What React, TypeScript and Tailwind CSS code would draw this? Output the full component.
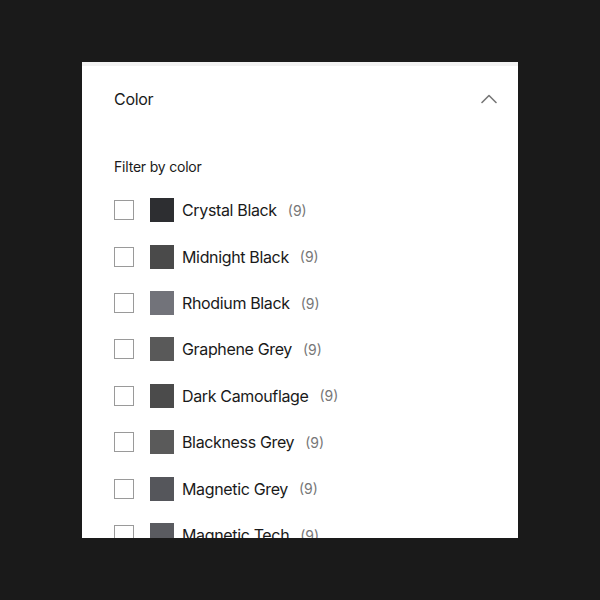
const colors = [
  { name: 'Crystal Black', swatch: 'bg-[#2d2e31]' },
  { name: 'Midnight Black', swatch: 'bg-[#4a4a4a]' },
  { name: 'Rhodium Black', swatch: 'bg-[#72737a]' },
  { name: 'Graphene Grey', swatch: 'bg-[#595959]' },
  { name: 'Dark Camouflage', swatch: 'bg-[#4b4b4b]' },
  { name: 'Blackness Grey', swatch: 'bg-[#5a5a5a]' },
  { name: 'Magnetic Grey', swatch: 'bg-[#55565b]' },
  { name: 'Magnetic Tech', swatch: 'bg-[#5a5b60]' },
];

export default function App() {
  return (
    <div
      className="w-[600px] h-[600px] bg-[#1a1a1a] flex items-center justify-center"
      style={{ fontFamily: 'Inter, "Noto Sans", sans-serif' }}
    >
      <div className="w-[436px] h-[476px] bg-white border-t-4 border-[#f2f2f2] overflow-hidden pl-8 pr-[21px]">
        <div className="flex items-center justify-between h-[24px] mt-[21px]">
          <span className="text-[16px] tracking-[-0.3px] text-[#1a1a1a]">Color</span>
          <svg width="16" height="10" viewBox="0 0 16 10" fill="none" className="mt-[-1px]">
            <polyline
              points="1,8.5 8,1.5 15,8.5"
              stroke="#777"
              strokeWidth="1.6"
              strokeLinecap="round"
              strokeLinejoin="round"
            />
          </svg>
        </div>

        <p className="mt-[46px] text-[14px] leading-5 tracking-[-0.2px] text-[#1a1a1a]">
          Filter by color
        </p>

        <div className="mt-[10px]">
          {colors.map((c) => (
            <label key={c.name} className="flex items-center h-[46.43px]">
              <span className="w-5 h-5 border border-[#9a9a9a] bg-white" />
              <span className={`w-6 h-6 ml-4 ${c.swatch}`} />
              <span className="ml-2 text-[16px] tracking-[-0.35px] text-[#1a1a1a]">{c.name}</span>
              <span className="ml-[11px] text-[14px] text-[#777]">(9)</span>
            </label>
          ))}
        </div>
      </div>
    </div>
  );
}
